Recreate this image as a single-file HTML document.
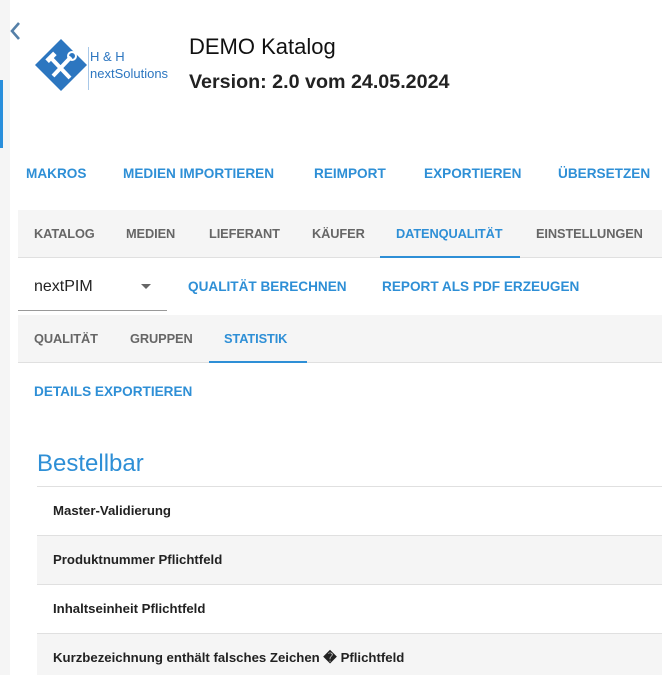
<!DOCTYPE html>
<html><head><meta charset="utf-8"><style>
*{margin:0;padding:0;box-sizing:border-box}
body{width:662px;height:675px;overflow:hidden;background:#fff;font-family:"Liberation Sans",sans-serif;position:relative;color:#212121}
.abs{position:absolute;white-space:nowrap}
.strip{left:0;top:0;width:10px;height:675px;background:#f5f5f5}
.bar{left:0;top:80px;width:3px;height:68px;background:#2a8fdc}
.btn{font-size:13.6px;font-weight:bold;color:#2e8fd6}
.tab{font-size:12.8px;font-weight:bold;color:#666;letter-spacing:-0.1px}
.gray{background:#f5f5f5}
.row{left:37px;width:625px;height:49px;border-top:1px solid #e0e0e0;font-size:13.2px;font-weight:bold;padding:16px 0 0 16px;color:#222}
</style></head><body>
<div class="abs strip"></div>
<div class="abs bar"></div>
<svg class="abs" style="left:8px;top:20px" width="14" height="22"><path d="M11 3 L4 11 L11 19" stroke="#5580a8" stroke-width="2.6" fill="none"/></svg>
<svg class="abs" style="left:34px;top:38px" width="56" height="54"><polygon points="27,1 53,27 27,53 1,27" fill="#2c76c0"/>
<path d="M17 20 L36 40 M37 19 L19 38" stroke="#fff" stroke-width="4" fill="none"/><circle cx="38" cy="18" r="4" fill="none" stroke="#fff" stroke-width="2"/><rect x="12" y="17" width="11" height="5" fill="#fff" transform="rotate(-45 17 20)"/></svg>
<div class="abs" style="left:88px;top:47px;width:1px;height:43px;background:#a8c8e8"></div>
<div class="abs" style="left:90px;top:49px;font-size:13px;color:#2c76c0">H &amp; H</div>
<div class="abs" style="left:90px;top:66px;font-size:13px;color:#2c76c0">nextSolutions</div>
<div class="abs" style="left:189px;top:34px;font-size:22px;color:#111">DEMO Katalog</div>
<div class="abs" style="left:189px;top:71px;font-size:19.7px;font-weight:bold;color:#222">Version: 2.0 vom 24.05.2024</div>
<div class="abs btn" style="left:26px;top:166px">MAKROS</div>
<div class="abs btn" style="left:123px;top:166px">MEDIEN IMPORTIEREN</div>
<div class="abs btn" style="left:314px;top:166px">REIMPORT</div>
<div class="abs btn" style="left:424px;top:166px">EXPORTIEREN</div>
<div class="abs btn" style="left:558px;top:166px">ÜBERSETZEN</div>
<div class="abs gray" style="left:18px;top:210px;width:644px;height:48px;border-bottom:1px solid #e0e0e0"></div>
<div class="abs tab" style="left:34px;top:226px">KATALOG</div>
<div class="abs tab" style="left:126px;top:226px">MEDIEN</div>
<div class="abs tab" style="left:209px;top:226px">LIEFERANT</div>
<div class="abs tab" style="left:312px;top:226px">KÄUFER</div>
<div class="abs tab" style="left:396px;top:226px;color:#2e8fd6">DATENQUALITÄT</div>
<div class="abs" style="left:380px;top:256px;width:140px;height:2px;background:#2e8fd6"></div>
<div class="abs tab" style="left:536px;top:226px">EINSTELLUNGEN</div>
<div class="abs" style="left:34px;top:278px;font-size:16px;color:#222">nextPIM</div>
<svg class="abs" style="left:141px;top:284px" width="12" height="6"><polygon points="0,0 10,0 5,5" fill="#666"/></svg>
<div class="abs" style="left:18px;top:310px;width:149px;height:1px;background:#999"></div>
<div class="abs btn" style="left:188px;top:279px">QUALITÄT BERECHNEN</div>
<div class="abs btn" style="left:382px;top:279px">REPORT ALS PDF ERZEUGEN</div>
<div class="abs gray" style="left:18px;top:315px;width:644px;height:48px;border-bottom:1px solid #e0e0e0"></div>
<div class="abs tab" style="left:34px;top:331px">QUALITÄT</div>
<div class="abs tab" style="left:130px;top:331px">GRUPPEN</div>
<div class="abs tab" style="left:224px;top:331px;color:#2e8fd6">STATISTIK</div>
<div class="abs" style="left:209px;top:361px;width:98px;height:2px;background:#2e8fd6"></div>
<div class="abs btn" style="left:34px;top:384px">DETAILS EXPORTIEREN</div>
<div class="abs" style="left:37px;top:450px;font-size:24px;color:#2e8fd6">Bestellbar</div>
<div class="abs row" style="top:486px">Master-Validierung</div>
<div class="abs row gray" style="top:535px">Produktnummer Pflichtfeld</div>
<div class="abs row" style="top:584px">Inhaltseinheit Pflichtfeld</div>
<div class="abs row gray" style="top:633px;height:42px">Kurzbezeichnung enthält falsches Zeichen � Pflichtfeld</div>
</body></html>
